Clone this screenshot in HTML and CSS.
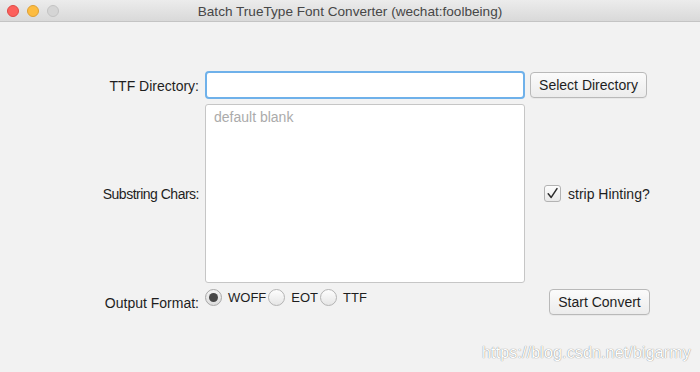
FILE: index.html
```html
<!DOCTYPE html>
<html>
<head>
<meta charset="utf-8">
<link rel="stylesheet" href="styles.css">
</head>
<body>
<div class="window">
  <div class="titlebar">
    <div class="lights">
      <span class="light red"></span>
      <span class="light yellow"></span>
      <span class="light gray"></span>
    </div>
    <div class="title">Batch TrueType Font Converter (wechat:foolbeing)</div>
  </div>
  <div class="content">
    <div class="form">
      <label class="label row1">TTF Directory:</label>
      <div class="field row1"><div class="input"></div></div>
      <div class="side row1"><button class="btn btn-select">Select Directory</button></div>

      <label class="label row2 tight">Substring Chars:</label>
      <div class="field row2"><div class="textarea"><span class="placeholder">default blank</span></div></div>
      <div class="side row2">
        <div class="check">
          <span class="box">
            <svg width="13" height="13" viewBox="0 0 13 13"><path d="M2.2 6.8 L5.2 10.4 L11 1.6" fill="none" stroke="#2b2b2b" stroke-width="1.5" stroke-linecap="round" stroke-linejoin="round"/></svg>
          </span>
          <span class="check-text">strip Hinting?</span>
        </div>
      </div>

      <label class="label row3">Output Format:</label>
      <div class="field row3 radios">
        <span class="radio on"><span class="dot"></span></span><span class="rtext">WOFF</span>
        <span class="radio"></span><span class="rtext">EOT</span>
        <span class="radio"></span><span class="rtext">TTF</span>
      </div>
      <div class="side row3"><button class="btn btn-start">Start Convert</button></div>
    </div>
  </div>
  <div class="watermark">https://blog.csdn.net/bigarmy</div>
</div>
</body>
</html>
```
FILE: styles.css
```css
* { box-sizing: border-box; }
html, body { margin: 0; padding: 0; }
body {
  width: 700px;
  height: 372px;
  overflow: hidden;
  background: #f2f2f2;
  font-family: "Liberation Sans", Arial, sans-serif;
  color: #1e1e1e;
}
.window {
  position: relative;
  width: 700px;
  height: 372px;
  background: #f2f2f2;
}
.titlebar {
  height: 22px;
  position: relative;
  background: linear-gradient(#ececec, #d9d9d9);
  border-bottom: 1px solid #c4c4c4;
  display: flex;
  align-items: center;
  justify-content: center;
}
.lights {
  position: absolute;
  left: 7px;
  top: 5px;
  display: flex;
  gap: 8px;
}
.light {
  width: 12px;
  height: 12px;
  border-radius: 50%;
  display: block;
}
.red { background: #fc605c; border: 1px solid #de4a45; }
.yellow { background: #fdbc40; border: 1px solid #dea034; }
.gray { background: #d5d5d5; border: 1px solid #c3c3c3; }
.title {
  font-size: 13.6px;
  color: #474747;
  margin-top: 1px;
}
.content {
  padding-top: 49px;
}
.form {
  display: grid;
  grid-template-columns: 199px 320px 175px;
  grid-template-rows: 28px 179px 26px;
  column-gap: 6px;
  row-gap: 5px;
  font-size: 14px;
}
.row3 { margin-top: 1px; }
.label {
  justify-self: end;
  align-self: center;
  color: #1e1e1e;
}
.label.tight { letter-spacing: -0.5px; }
.row1.label { margin-top: 1px; }
.row3.label { margin-top: 4px; }
.input {
  width: 320px;
  height: 28px;
  background: #fff;
  border: 2px solid #6fb1ea;
  border-radius: 4px;
}
.textarea {
  width: 320px;
  height: 179px;
  background: #fff;
  border: 1px solid #c6c6c6;
  border-radius: 3px;
  padding: 4px 8px;
}
.placeholder { color: #ababab; font-size: 14px; }
.side { display: flex; }
.btn {
  font-family: "Liberation Sans", Arial, sans-serif;
  font-size: 14px;
  color: #1e1e1e;
  height: 26px;
  padding: 0;
  border: 1px solid #b9b9b9;
  border-radius: 4px;
  background: linear-gradient(#fbfbfb, #ececec);
  box-shadow: 0 1px 0 rgba(0,0,0,0.04);
}
.btn-select { width: 117px; margin-left: -1px; margin-top: 1px; }
.btn-start { width: 101px; margin-left: 18px; }
.row2.side { align-items: center; }
.check {
  display: flex;
  align-items: center;
  margin-left: 13px;
}
.box {
  width: 17px;
  height: 17px;
  border: 1px solid #b3b3b3;
  border-radius: 3px;
  background: linear-gradient(#fdfdfd, #e9e9e9);
  display: flex;
  align-items: center;
  justify-content: center;
}
.check-text { margin-left: 7px; }
.radios {
  display: flex;
  align-items: center;
  align-self: start;
  height: 17px;
}
.radio {
  width: 17px;
  height: 17px;
  border-radius: 50%;
  border: 1px solid #b4b4b4;
  background: linear-gradient(#fdfdfd, #e6e6e6);
  display: flex;
  align-items: center;
  justify-content: center;
  flex: none;
}
.radio.on {
  background: linear-gradient(#f4f4f4, #dcdcdc);
  border-color: #a8a8a8;
}
.dot {
  width: 9px;
  height: 9px;
  border-radius: 50%;
  background: #474747;
}
.rtext { font-size: 13px; margin-left: 6px; margin-right: 2px; }
.watermark {
  position: absolute;
  left: 482px;
  top: 344px;
  font-size: 16px;
  font-family: "Liberation Sans", Arial, sans-serif;
  color: #ffffff;
  text-shadow: 0 0 1px rgba(0,0,0,0.45), 0 0 1px rgba(0,0,0,0.2);
  letter-spacing: 0.15px;
}
```
